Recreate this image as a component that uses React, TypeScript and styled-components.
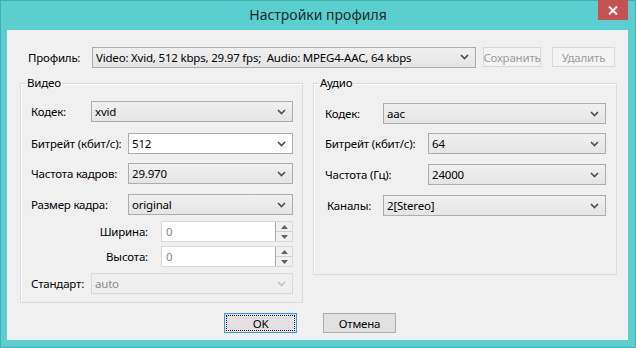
import styled, { createGlobalStyle } from "styled-components";

const GlobalStyle = createGlobalStyle`
  html, body {
    margin: 0;
    padding: 0;
    width: 636px;
    height: 348px;
    overflow: hidden;
  }
  body {
    font-family: "Noto Sans", "Open Sans", sans-serif;
    font-size: 11.5px;
    letter-spacing: -0.2px;
    color: #000;
  }
`;

type Kind = "readonly" | "editable" | "disabled";

function Chevron({ color }: { color: string }) {
  return (
    <svg width="9" height="6" viewBox="0 0 9 6">
      <path d="M1 1 L4.5 4.5 L8 1" fill="none" stroke={color} strokeWidth="1.7" />
    </svg>
  );
}

function Combo({ value, kind = "readonly", width }: { value: string; kind?: Kind; width?: number }) {
  return (
    <ComboBox $kind={kind} $width={width}>
      <ComboText>{value}</ComboText>
      <Chevron color={kind === "disabled" ? "#c4c4c4" : "#505050"} />
    </ComboBox>
  );
}

function Spin({ value }: { value: string }) {
  return (
    <SpinBox>
      <SpinText>{value}</SpinText>
      <SpinButtons>
        <SpinButton>
          <svg width="7" height="4" viewBox="0 0 7 4">
            <path d="M0 4 L3.5 0 L7 4 Z" fill="#606060" />
          </svg>
        </SpinButton>
        <SpinButton>
          <svg width="7" height="4" viewBox="0 0 7 4">
            <path d="M0 0 L3.5 4 L7 0 Z" fill="#606060" />
          </svg>
        </SpinButton>
      </SpinButtons>
    </SpinBox>
  );
}

export default function App() {
  return (
    <>
      <GlobalStyle />
      <Window>
        <TitleBar>
          <span />
          <Title>Настройки профиля</Title>
          <CloseButton>
            <svg width="10" height="9" viewBox="0 0 10 9">
              <path d="M1 0.5 L9 8.5 M9 0.5 L1 8.5" stroke="#fff" strokeWidth="2" />
            </svg>
          </CloseButton>
        </TitleBar>
        <Client>
          <ProfileRow>
            <Label $width={64}>Профиль:</Label>
            <Combo value="Video: Xvid, 512 kbps, 29.97 fps;  Audio: MPEG4-AAC, 64 kbps" width={384} />
            <Button $disabled $width={58} $ml={7}>Сохранить</Button>
            <Button $disabled $width={63} $ml={11}>Удалить</Button>
          </ProfileRow>

          <Groups>
            <Group $width={283}>
              <Legend>Видео</Legend>
              <GroupBody $pl={10} $pr={9} $pb={8}>
                <Row $mt={10}>
                  <Label $width={60}>Кодек:</Label>
                  <Combo value="xvid" />
                </Row>
                <Row $mt={11}>
                  <Label $width={97}>Битрейт (кбит/с):</Label>
                  <Combo value="512" kind="editable" />
                </Row>
                <Row $mt={9}>
                  <Label $width={97}>Частота кадров:</Label>
                  <Combo value="29.970" />
                </Row>
                <Row $mt={10}>
                  <Label $width={97}>Размер кадра:</Label>
                  <Combo value="original" />
                </Row>
                <Row $mt={6}>
                  <Label $width={117} $right $mr={13}>Ширина:</Label>
                  <Spin value="0" />
                </Row>
                <Row $mt={4}>
                  <Label $width={117} $right $mr={13}>Высота:</Label>
                  <Spin value="0" />
                </Row>
                <Row $mt={6}>
                  <Label $width={60}>Стандарт:</Label>
                  <Combo value="auto" kind="disabled" />
                </Row>
              </GroupBody>
            </Group>

            <Group $width={304}>
              <Legend>Аудио</Legend>
              <GroupBody $pl={11} $pr={10} $pb={58}>
                <Row $mt={12}>
                  <Label $width={58}>Кодек:</Label>
                  <Combo value="aac" />
                </Row>
                <Row $mt={9}>
                  <Label $width={103}>Битрейт (кбит/с):</Label>
                  <Combo value="64" />
                </Row>
                <Row $mt={10}>
                  <Label $width={103}>Частота (Гц):</Label>
                  <Combo value="24000" />
                </Row>
                <Row $mt={10}>
                  <Label $width={56} $ml={2}>Каналы:</Label>
                  <Combo value="2[Stereo]" />
                </Row>
              </GroupBody>
            </Group>
          </Groups>

          <Footer>
            <Button $default $width={73}>
              <FocusRing>OK</FocusRing>
            </Button>
            <Button $width={73} $ml={26}>Отмена</Button>
          </Footer>
        </Client>
      </Window>
    </>
  );
}

const Window = styled.div`
  width: 636px;
  height: 348px;
  box-sizing: border-box;
  background: #5bcfcf;
  border: 1px solid #43b0b0;
  display: flex;
  flex-direction: column;
`;

const TitleBar = styled.div`
  height: 29px;
  display: grid;
  grid-template-columns: 1fr auto 1fr;
  padding-right: 7px;
`;

const Title = styled.div`
  font-size: 14px;
  letter-spacing: 0;
  color: #1f2d2d;
  line-height: 28px;
  padding-left: 7px;
`;

const CloseButton = styled.div`
  justify-self: end;
  width: 30px;
  height: 20px;
  margin-top: -1px;
  background: #c75050;
  display: flex;
  align-items: center;
  justify-content: center;
`;

const Client = styled.div`
  flex: 1;
  margin: 0 7px 7px 6px;
  background: #f0f0f0;
  padding: 17px 0 0 13px;
  box-sizing: border-box;
  display: flex;
  flex-direction: column;
`;

const ProfileRow = styled.div`
  display: flex;
  align-items: center;
  height: 20px;
  margin-left: 8px;
`;

const Label = styled.div<{ $width: number; $right?: boolean; $mr?: number; $ml?: number }>`
  flex: none;
  width: ${(p) => p.$width}px;
  margin-right: ${(p) => p.$mr ?? 0}px;
  margin-left: ${(p) => p.$ml ?? 0}px;
  text-align: ${(p) => (p.$right ? "right" : "left")};
  white-space: nowrap;
`;

const ComboBox = styled.div<{ $kind: Kind; $width?: number }>`
  ${(p) => (p.$width ? `width: ${p.$width}px; flex: none;` : "flex: 1;")}
  height: 21px;
  box-sizing: border-box;
  display: flex;
  align-items: center;
  padding: 0 6px 0 3px;
  border: 1px solid ${(p) => (p.$kind === "disabled" ? "#d9d9d9" : "#acacac")};
  background: ${(p) =>
    p.$kind === "editable"
      ? "#ffffff"
      : p.$kind === "disabled"
      ? "#efefef"
      : "linear-gradient(#f0f0f0, #e5e5e5)"};
  color: ${(p) => (p.$kind === "disabled" ? "#8a8a8a" : "#000")};
`;

const ComboText = styled.span`
  flex: 1;
  white-space: pre;
  overflow: hidden;
`;

const Button = styled.div<{ $width: number; $ml?: number; $disabled?: boolean; $default?: boolean }>`
  flex: none;
  width: ${(p) => p.$width}px;
  height: 20px;
  margin-left: ${(p) => p.$ml ?? 0}px;
  box-sizing: border-box;
  display: flex;
  align-items: center;
  justify-content: center;
  border: 1px solid
    ${(p) => (p.$default ? "#3399ff" : p.$disabled ? "#d9d9d9" : "#adadad")};
  background: ${(p) => (p.$disabled ? "#f4f4f4" : "#e1e1e1")};
  color: ${(p) => (p.$disabled ? "#9d9d9d" : "#000")};
  padding: 1px;
`;

const FocusRing = styled.div`
  flex: 1;
  align-self: stretch;
  display: flex;
  align-items: center;
  justify-content: center;
  border: 1px dotted #000;
`;

const Groups = styled.div`
  display: flex;
  align-items: flex-start;
  gap: 10px;
  margin-top: 8px;
`;

const Group = styled.fieldset<{ $width: number }>`
  width: ${(p) => p.$width}px;
  box-sizing: border-box;
  min-width: 0;
  margin: 0;
  padding: 0;
  border: 1px solid #dcdcdc;
  box-shadow: inset 1px 1px 0 #fff;
`;

const Legend = styled.legend`
  margin-left: 5px;
  padding: 0 1px;
  line-height: 16px;
`;

const GroupBody = styled.div<{ $pl: number; $pr: number; $pb: number }>`
  display: flex;
  flex-direction: column;
  padding: 0 ${(p) => p.$pr}px ${(p) => p.$pb}px ${(p) => p.$pl}px;
`;

const Row = styled.div<{ $mt: number }>`
  display: flex;
  align-items: center;
  margin-top: ${(p) => p.$mt}px;
`;

const SpinBox = styled.div`
  flex: 1;
  height: 21px;
  box-sizing: border-box;
  display: flex;
  border: 1px solid #d9d9d9;
  background: #fff;
`;

const SpinText = styled.span`
  flex: 1;
  padding-left: 4px;
  line-height: 19px;
  color: #8a8a8a;
`;

const SpinButtons = styled.div`
  width: 16px;
  display: flex;
  flex-direction: column;
  border-left: 1px solid #acacac;
`;

const SpinButton = styled.div`
  flex: 1;
  display: flex;
  align-items: center;
  justify-content: center;
  background: #f0f0f0;
  & + & {
    border-top: 1px solid #d0d0d0;
  }
`;

const Footer = styled.div`
  display: flex;
  margin-top: 10px;
  padding-left: 204px;
`;
